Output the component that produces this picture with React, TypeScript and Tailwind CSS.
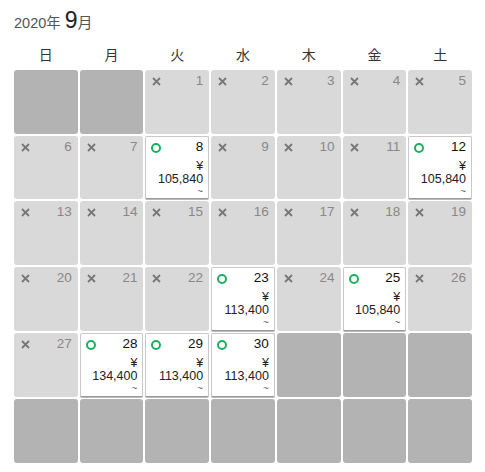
import React from 'react';

type Day = {
  kind: 'none' | 'closed' | 'open';
  date?: number;
  price?: string;
};

const weekdays = ['日', '月', '火', '水', '木', '金', '土'];

const prices: Record<number, string> = {
  8: '105,840',
  12: '105,840',
  23: '113,400',
  25: '105,840',
  28: '134,400',
  29: '113,400',
  30: '113,400',
};

function buildDays(): Day[] {
  const days: Day[] = [{kind: 'none'}, {kind: 'none'}];
  for (let d = 1; d <= 30; d++) {
    days.push(prices[d] ? {kind: 'open', date: d, price: prices[d]} : {kind: 'closed', date: d});
  }
  while (days.length < 42) days.push({kind: 'none'});
  return days;
}

function Cross() {
  return (
    <svg width="9" height="9" viewBox="0 0 9 9" className="mt-[4px]">
      <path d="M1 1 L8 8 M8 1 L1 8" stroke="#777" strokeWidth="1.8" strokeLinecap="butt" />
    </svg>
  );
}

function Cell({day}: {day: Day}) {
  if (day.kind === 'none') {
    return <div className="rounded-[3px] bg-[#b3b3b3]" />;
  }
  if (day.kind === 'closed') {
    return (
      <div className="rounded-[3px] bg-[#d9d9d9] px-[6px] pt-[2px]">
        <div className="flex items-start justify-between">
          <div className="pl-[1px] pt-[1px]">
            <Cross />
          </div>
          <span className="text-[13.5px] leading-[17px] text-[#888]">{day.date}</span>
        </div>
      </div>
    );
  }
  return (
    <div className="flex flex-col overflow-hidden rounded-[2px] border border-[#c8c8c8] border-b-[#999] bg-white px-[5px] pt-[1px] shadow-[0_1px_0_#bbb]">
      <div className="flex items-start justify-between">
        <div className="mt-[5px] h-[10px] w-[10px] rounded-full border-[2px] border-[#1bb061]" />
        <span className="text-[13.5px] leading-[17px] text-[#111]">{day.date}</span>
      </div>
      <div className="mt-[5px] flex flex-col items-end text-[12.5px] leading-[13px] text-[#222]">
        <span>¥</span>
        <span>{day.price}</span>
        <span className="text-[10px] leading-[12px] text-[#666]">~</span>
      </div>
    </div>
  );
}

export default function App() {
  const days = buildDays();
  return (
    <div className="min-h-[472px] w-[485px] bg-white pl-[14px] pt-[6px] font-['Liberation_Sans','Noto_Sans_CJK_JP',sans-serif]">
      <div className="flex items-baseline text-[#555]">
        <span className="text-[14.5px]">2020年</span>
        <span className="ml-[4px] text-[23px] leading-[28px] text-[#222]">9</span>
        <span className="text-[15px]">月</span>
      </div>
      <div className="mt-[11px] grid w-[458px] grid-cols-7 gap-[2px]">
        {weekdays.map((w) => (
          <div key={w} className="h-[24px] text-center text-[14px] leading-[18px] text-[#333]">
            {w}
          </div>
        ))}
      </div>
      <div className="grid w-[458px] auto-rows-[63.8px] grid-cols-7 gap-[2px]">
        {days.map((d, i) => (
          <Cell key={i} day={d} />
        ))}
      </div>
    </div>
  );
}
